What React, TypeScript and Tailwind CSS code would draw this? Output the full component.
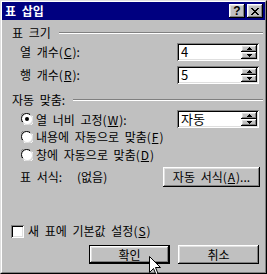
import React from 'react';

const font = { fontFamily: '"Noto Sans CJK KR", "Liberation Sans", sans-serif' };

const raised =
  'bg-[#c0c0c0] shadow-[inset_-1px_-1px_#000,inset_1px_1px_#fff,inset_-2px_-2px_#808080,inset_2px_2px_#dfdfdf]';
const sunken =
  'bg-white shadow-[inset_1px_1px_#808080,inset_-1px_-1px_#fff,inset_2px_2px_#000,inset_-2px_-2px_#dfdfdf]';

function U({ children }: { children: React.ReactNode }) {
  return <span className="underline underline-offset-[1px] px-[1px]">{children}</span>;
}

function GroupHeader({ label }: { label: React.ReactNode }) {
  return (
    <div className="flex items-center h-[14px] pl-[10px] pr-[2px]">
      <span className="leading-[14px] whitespace-nowrap">{label}</span>
      <div className="flex-1 ml-[8px] h-[2px] border-t border-t-[#808080] border-b border-b-white" />
    </div>
  );
}

function Arrow({ up }: { up?: boolean }) {
  return (
    <svg width="5" height="3" viewBox="0 0 5 3" className="block">
      {up ? <path d="M2 0h1v1h1v1h1v1H0V2h1V1h1z" fill="#000" /> : <path d="M0 0h5v1H4v1H3v1H2V2H1V1H0z" fill="#000" />}
    </svg>
  );
}

function SpinInput({ value }: { value: string }) {
  return (
    <div className={`relative w-[82px] h-[18px] ${sunken}`}>
      <span className="absolute left-[4px] top-[1px] text-[13px] leading-[16px]">{value}</span>
      <div className="absolute right-[2px] top-[2px] w-[16px] h-[14px] flex flex-col">
        <div className={`flex-1 flex items-center justify-center ${raised}`}>
          <Arrow up />
        </div>
        <div className={`flex-1 flex items-center justify-center ${raised}`}>
          <Arrow />
        </div>
      </div>
    </div>
  );
}

function Radio({ checked }: { checked?: boolean }) {
  return (
    <svg width="12" height="12" viewBox="0 0 12 12" className="shrink-0">
      <circle cx="6" cy="6" r="5.5" fill="#fff" />
      <path d="M1 9A5.5 5.5 0 0 1 9 1" stroke="#808080" strokeWidth="1" fill="none" />
      <path d="M2 9.3A4.6 4.6 0 0 1 9.3 2" stroke="#000" strokeWidth="1" fill="none" />
      <path d="M3 11A5.5 5.5 0 0 0 11 3" stroke="#fff" strokeWidth="1" fill="none" />
      <path d="M2.7 10A4.6 4.6 0 0 0 10 2.7" stroke="#dfdfdf" strokeWidth="1" fill="none" />
      {checked && <circle cx="6" cy="6" r="2" fill="#000" />}
    </svg>
  );
}

export default function App() {
  return (
    <div style={font} className="w-[267px] h-[274px] bg-[#c0c0c0] text-[12px] text-black relative select-none [word-spacing:3px]">
      <div className="w-full h-full border border-t-[#dfdfdf] border-l-[#dfdfdf] border-r-black border-b-black">
        <div className="w-full h-full border border-t-white border-l-white border-r-[#808080] border-b-[#808080] flex flex-col">
          {/* title bar */}
          <div className="h-[18px] bg-[#000080] flex items-center pl-[3px] pr-[2px]">
            <span className="text-white font-bold text-[12px] leading-[14px] flex-1">표 삽입</span>
            <div className={`w-[16px] h-[14px] flex items-center justify-center ${raised}`}>
              <span className="font-bold text-[12px] leading-none" style={{ fontFamily: '"Liberation Sans", sans-serif' }}>?</span>
            </div>
            <div className={`ml-[2px] w-[16px] h-[14px] flex items-center justify-center ${raised}`}>
              <svg width="8" height="7" viewBox="0 0 8 7">
                <path d="M0 0h2v1h1v1h2V1h1V0h2v1H7v1H6v1H5v1h1v1h1v1h1v1H6V6H5V5H3v1H2v1H0V6h1V5h1V4h1V3H2V2H1V1H0z" fill="#000" />
              </svg>
            </div>
          </div>

          {/* 표 크기 */}
          <div className="mt-[6px]">
            <GroupHeader label="표 크기" />
          </div>
          <div className="mt-[3px] flex items-center h-[18px] pl-[18px] pr-[6px]">
            <span className="flex-1 leading-[14px]">열 개수(<U>C</U>):</span>
            <SpinInput value="4" />
          </div>
          <div className="mt-[5px] flex items-center h-[18px] pl-[18px] pr-[6px]">
            <span className="flex-1 leading-[14px]">행 개수(<U>R</U>):</span>
            <SpinInput value="5" />
          </div>

          {/* 자동 맞춤 */}
          <div className="mt-[9px]">
            <GroupHeader label="자동 맞춤:" />
          </div>
          <div className="mt-[3px] flex items-center h-[18px] pl-[19px] pr-[6px]">
            <Radio checked />
            <span className="flex-1 ml-[3px] leading-[14px] mt-[1px]">열 너비 고정(<U>W</U>):</span>
            <SpinInput value="자동" />
          </div>
          <div className="mt-[2px] flex items-center h-[14px] pl-[19px]">
            <Radio />
            <span className="ml-[3px] leading-[14px]">내용에 자동으로 맞춤(<U>F</U>)</span>
          </div>
          <div className="mt-[4px] flex items-center h-[14px] pl-[19px]">
            <Radio />
            <span className="ml-[3px] leading-[14px]">창에 자동으로 맞춤(<U>D</U>)</span>
          </div>
          <div className="mt-[5px] flex items-center h-[20px] pl-[18px] pr-[5px]">
            <span className="w-[57px] leading-[14px]">표 서식:</span>
            <span className="flex-1 leading-[14px]">(없음)</span>
            <div className={`w-[97px] h-[20px] flex items-center justify-center ${raised}`}>
              <span className="leading-[14px]">자동 서식(<U>A</U>)...</span>
            </div>
          </div>

          {/* checkbox */}
          <div className="mt-[37px] flex items-center h-[14px] pl-[9px]">
            <div className={`w-[13px] h-[13px] ${sunken}`} />
            <span className="ml-[4px] leading-[14px]">새 표에 기본값 설정(<U>S</U>)</span>
          </div>

          {/* buttons */}
          <div className="mt-[7px] flex h-[19px] pl-[87px] gap-[8px]">
            <div className="w-[81px] h-[19px] border border-black">
              <div className={`w-full h-full flex items-center justify-center ${raised}`}>
                <span className="leading-[14px]">확인</span>
              </div>
            </div>
            <div className={`w-[81px] h-[19px] flex items-center justify-center ${raised}`}>
              <span className="leading-[14px]">취소</span>
            </div>
          </div>
        </div>
      </div>

      {/* mouse cursor */}
      <svg width="12" height="19" viewBox="0 0 12 19" className="absolute left-[149px] top-[256px]">
        <path d="M0.5 0.5V16.5L4.5 12.5L7 18.5L9 17.5L6.5 11.5H11.5Z" fill="#fff" stroke="#000" strokeWidth="1" />
      </svg>
    </div>
  );
}
